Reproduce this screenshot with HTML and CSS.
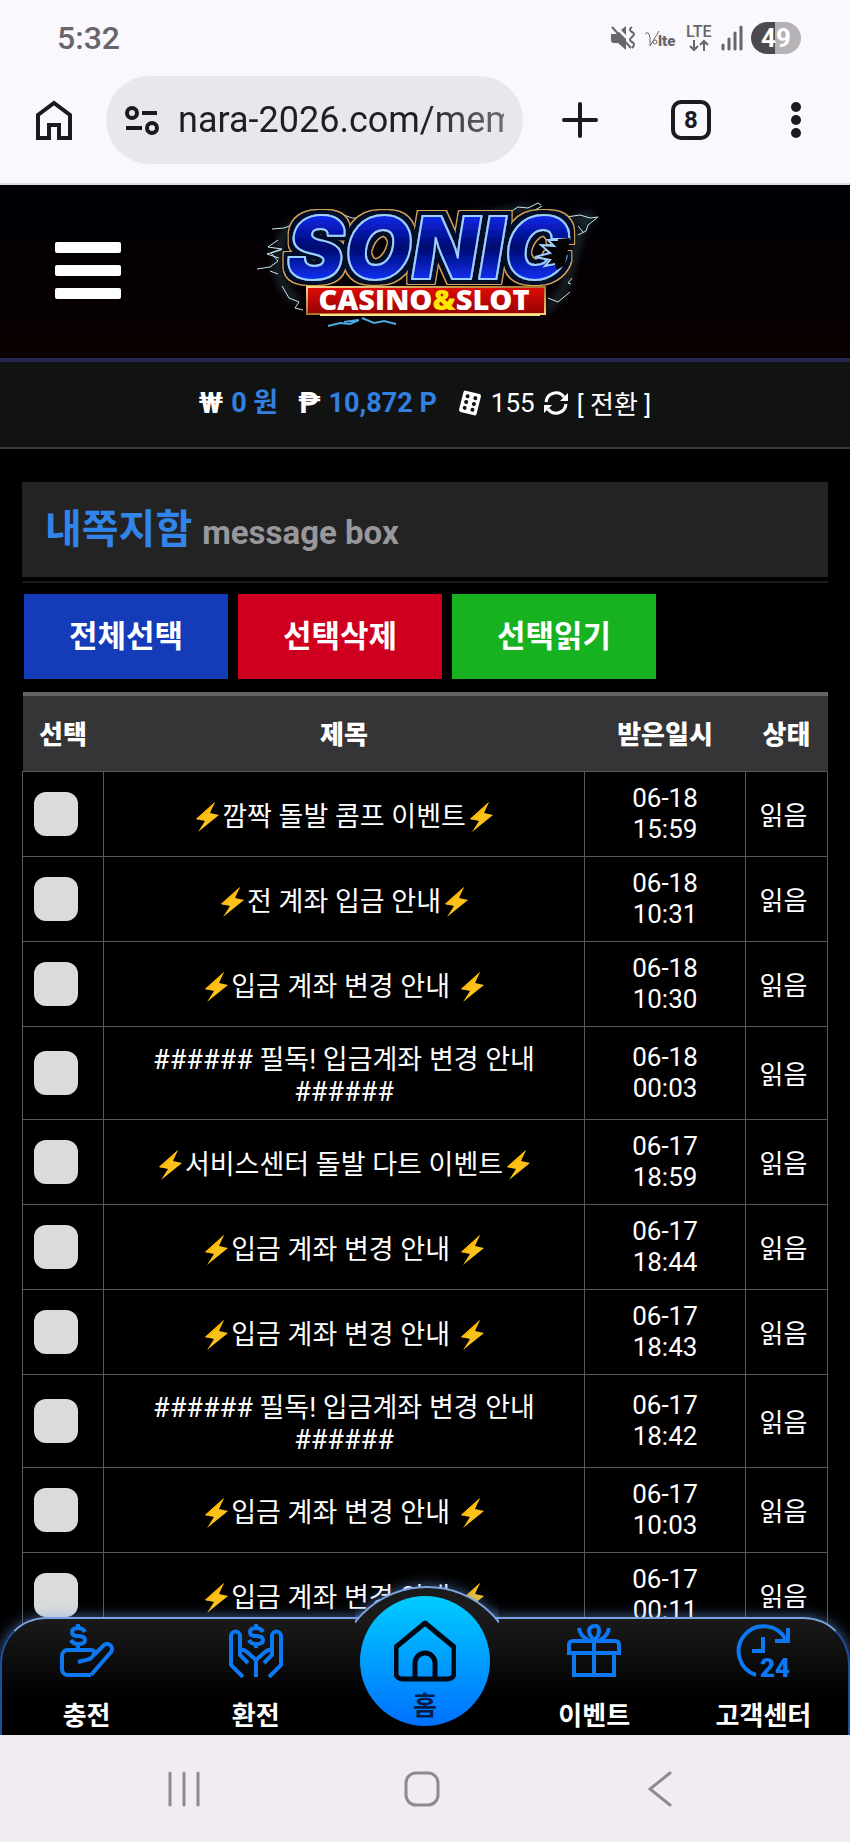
FILE: index.html
```html
<!DOCTYPE html>
<html lang="ko">
<head>
    <meta charset="UTF-8">
    <meta name="viewport" content="width=device-width, initial-scale=1.0">
    <title>내쪽지함</title>
    <link rel="stylesheet" href="styles.css">
</head>
<body>
    <svg class="symbols" aria-hidden="true">
        <symbol id="bolt" viewBox="0 0 30 30">
            <path d="M23 0L4 17l9 2L6 30 27 13l-9-2z" fill="#fcc21b"/>
            <path d="M23 0L4 17l3 .7L19 7z" fill="#feb804"/>
        </symbol>
    </svg>

    <div class="status">
        <span class="clock">5:32</span>
        <div class="status-icons">
            <svg width="26" height="26" viewBox="0 0 26 26">
                <path d="M1 9h5l3-2 7 7v11l-8-7H4a3 3 0 0 1-3-3zM11 5l5-4v9z" fill="#68666a"/>
                <path d="M2 2l19 21" stroke="#68666a" stroke-width="2"/>
                <path d="M22 2q-4 3 0 5t0 5t0 5t0 6" fill="none" stroke="#68666a" stroke-width="2"/>
            </svg>
            <svg width="34" height="26" viewBox="0 0 34 26">
                <path d="M1 9q4-4 5 4v8L15 6" fill="none" stroke="#68666a" stroke-width="1"/>
                <circle cx="11" cy="17" r="2" fill="none" stroke="#68666a"/>
                <text x="14" y="21" class="lte-small">lte</text>
            </svg>
            <svg width="27" height="30" viewBox="0 0 27 30">
                <text x="0" y="14" class="lte">LTE</text>
                <path d="M8 17v10M4 23l4 4 4-4M18 28V18M14 22l4-4 4 4" fill="none" stroke="#68666a" stroke-width="2"/>
            </svg>
            <svg width="22" height="26" viewBox="0 0 22 26">
                <path d="M2 20v4M8 14v10M14 8v16M20 2v22" stroke="#68666a" stroke-width="3" stroke-linecap="round"/>
            </svg>
            <span class="battery">49</span>
        </div>
    </div>

    <div class="browser">
        <button type="button" class="tool home" aria-label="홈페이지">
            <svg width="38" height="42" viewBox="0 0 38 42">
                <path d="M3 39V16L19 4l16 12v23H24V26H14v13z" fill="none" stroke="#1b1a1e" stroke-width="4"/>
            </svg>
        </button>
        <div class="address">
            <svg width="34" height="30" viewBox="0 0 34 30" fill="none" stroke="#1b1a1e" stroke-width="4">
                <circle cx="7" cy="8" r="5"/>
                <circle cx="27" cy="23" r="5"/>
                <path d="M17 8h15M1 23h16"/>
            </svg>
            <input type="text" aria-label="주소" value="nara-2026.com/mem">
        </div>
        <button type="button" class="tool plus" aria-label="새 탭">
            <svg width="36" height="36" viewBox="0 0 36 36">
                <path d="M18 2v32M2 18h32" stroke="#1b1a1e" stroke-width="4" stroke-linecap="round"/>
            </svg>
        </button>
        <button type="button" class="tool tabs">8</button>
        <button type="button" class="tool more" aria-label="메뉴">
            <svg width="10" height="38" viewBox="0 0 10 38" fill="#1b1a1e">
                <circle cx="5" cy="6" r="5"/>
                <circle cx="5" cy="19" r="5"/>
                <circle cx="5" cy="32" r="5"/>
            </svg>
        </button>
    </div>

    <div class="page">
        <header class="header">
            <button type="button" class="menu-btn" aria-label="전체메뉴">
                <span></span>
                <span></span>
                <span></span>
            </button>
            <a href="#" class="logo" aria-label="SONIC CASINO&amp;SLOT">
                <svg width="370" height="170" viewBox="0 0 370 170">
                    <defs>
                        <linearGradient id="sonicFill" x1="0" y1="0" x2="0" y2="1">
                            <stop offset=".2" stop-color="#0a28e8"/>
                            <stop offset=".5" stop-color="#02086e"/>
                            <stop offset=".8" stop-color="#0a30f0"/>
                        </linearGradient>
                        <linearGradient id="gold" x1="0" y1="0" x2="1" y2="1">
                            <stop offset="0" stop-color="#f6d68a"/>
                            <stop offset=".5" stop-color="#a8742c"/>
                            <stop offset="1" stop-color="#f8d070"/>
                        </linearGradient>
                        <linearGradient id="red" x1="0" y1="0" x2="0" y2="1">
                            <stop offset="0" stop-color="#e00c08"/>
                            <stop offset="1" stop-color="#960202"/>
                        </linearGradient>
                        <filter id="glow" x="-20%" y="-20%" width="140%" height="140%">
                            <feGaussianBlur stdDeviation="4"/>
                        </filter>
                        <!-- dark band and gold rim round the letters -->
                        <filter id="rim" x="-10%" y="-20%" width="120%" height="140%">
                            <feMorphology in="SourceAlpha" operator="dilate" radius="5" result="wide"/>
                            <feMorphology in="SourceAlpha" operator="dilate" radius="4" result="narrow"/>
                            <feFlood flood-color="#d8a452"/>
                            <feComposite in2="wide" operator="in" result="goldRim"/>
                            <feFlood flood-color="#04102c"/>
                            <feComposite in2="narrow" operator="in" result="darkRim"/>
                            <feMerge>
                                <feMergeNode in="goldRim"/>
                                <feMergeNode in="darkRim"/>
                                <feMergeNode in="SourceGraphic"/>
                            </feMerge>
                        </filter>
                    </defs>
                    <g fill="none" stroke="#5d93a0" stroke-width="4" opacity=".5" filter="url(#glow)">
                        <path d="M50 38l-8 14-6 28 6 18 14 18M330 34l20-4-10 18-16 56-18 20M66 32l40-2M230 32l60-10"/>
                    </g>
                    <g fill="none" stroke="#c4e8ee" stroke-width="1">
                        <path d="M32 43l12-1 8-3M38 54l-10 7 14 2-15 5 12 4M17 83l13-2 8-6-7-8 10-3M30 85l8 3M42 100l7 12 10 4-4 6 8 2M64 33l30-1 10-3 8 3 16 0"/>
                        <path d="M220 34l16-7 18-2 10 5 14-9 10 1 10-5 3 2M288 28l14-8M320 32l20-3 10 3 8-1-10 8-2 6-8 4M338 40l5 6M332 92l-4 5 3 1M308 112l10 4 12-10"/>
                        <path d="M88 140l12-3 10 1 9-4M104 136l14-2M122 132l12 5 10-2 12 3" stroke="#4ca8e0" stroke-width="2"/>
                    </g>
                    <text x="188" y="93" class="sonic" filter="url(#rim)">SONIC</text>
                    <path d="M330 52l-22 2 6 6-13-1 9 8-15 4 15 3-5 6 10-2 2 6 8-5z" fill="#060303"/>
                    <path d="M318 54l-10 0 6 6-13-1 9 8-15 4 15 3-5 6 10-2" fill="none" stroke="#9ed0ff" stroke-width="2"/>
                    <rect x="67" y="101" width="238" height="27" fill="url(#red)" stroke="url(#gold)" stroke-width="2"/>
                    <path d="M80 129h220" stroke="#ffe08a" stroke-width="2"/>
                    <text x="184" y="124" class="casino">CASINO<tspan fill="#ffe600">&amp;</tspan>SLOT</text>
                </svg>
            </a>
        </header>

        <div class="wallet">
            <span class="sign">₩</span>
            <b class="won">0 원</b>
            <span class="sign">₱</span>
            <b class="point">10,872 P</b>
            <svg width="26" height="26" viewBox="0 0 26 26">
                <g transform="rotate(14 13 13)">
                    <rect x="4" y="2" width="18" height="22" rx="2" fill="#fff"/>
                    <g fill="#111312">
                        <circle cx="9" cy="7" r="2"/>
                        <circle cx="17" cy="7" r="2"/>
                        <circle cx="9" cy="13" r="2"/>
                        <circle cx="17" cy="13" r="2"/>
                        <circle cx="9" cy="19" r="2"/>
                        <circle cx="17" cy="19" r="2"/>
                    </g>
                </g>
            </svg>
            <span>155</span>
            <svg width="26" height="26" viewBox="0 0 26 26">
                <path d="M3 12a10 10 0 0 1 18-5M23 14a10 10 0 0 1-18 5" fill="none" stroke="#fff" stroke-width="3"/>
                <path d="M25 3v8h-8zM1 23v-8h8z" fill="#fff"/>
            </svg>
            <a href="#" class="convert">[ 전환 ]</a>
        </div>

        <main class="content">
            <h1 class="title">내쪽지함 <small>message box</small></h1>

            <div class="btn-group">
                <button type="button" class="btn blue">전체선택</button>
                <button type="button" class="btn red">선택삭제</button>
                <button type="button" class="btn green">선택읽기</button>
            </div>

            <table class="list">
                <thead>
                    <tr>
                        <th class="col-check">선택</th>
                        <th>제목</th>
                        <th class="col-date">받은일시</th>
                        <th class="col-state">상태</th>
                    </tr>
                </thead>
                <tbody>
                    <tr>
                        <td class="check"><input type="checkbox" aria-label="선택"></td>
                        <td class="subject"><svg class="bolt"><use href="#bolt"/></svg>깜짝 돌발 콤프 이벤트<svg class="bolt"><use href="#bolt"/></svg></td>
                        <td>06-18<br>15:59</td>
                        <td class="state">읽음</td>
                    </tr>
                    <tr>
                        <td class="check"><input type="checkbox" aria-label="선택"></td>
                        <td class="subject"><svg class="bolt"><use href="#bolt"/></svg>전 계좌 입금 안내<svg class="bolt"><use href="#bolt"/></svg></td>
                        <td>06-18<br>10:31</td>
                        <td class="state">읽음</td>
                    </tr>
                    <tr>
                        <td class="check"><input type="checkbox" aria-label="선택"></td>
                        <td class="subject"><svg class="bolt"><use href="#bolt"/></svg>입금 계좌 변경 안내 <svg class="bolt"><use href="#bolt"/></svg></td>
                        <td>06-18<br>10:30</td>
                        <td class="state">읽음</td>
                    </tr>
                    <tr>
                        <td class="check"><input type="checkbox" aria-label="선택"></td>
                        <td class="subject">###### 필독! 입금계좌 변경 안내 ######</td>
                        <td>06-18<br>00:03</td>
                        <td class="state">읽음</td>
                    </tr>
                    <tr>
                        <td class="check"><input type="checkbox" aria-label="선택"></td>
                        <td class="subject"><svg class="bolt"><use href="#bolt"/></svg>서비스센터 돌발 다트 이벤트<svg class="bolt"><use href="#bolt"/></svg></td>
                        <td>06-17<br>18:59</td>
                        <td class="state">읽음</td>
                    </tr>
                    <tr>
                        <td class="check"><input type="checkbox" aria-label="선택"></td>
                        <td class="subject"><svg class="bolt"><use href="#bolt"/></svg>입금 계좌 변경 안내 <svg class="bolt"><use href="#bolt"/></svg></td>
                        <td>06-17<br>18:44</td>
                        <td class="state">읽음</td>
                    </tr>
                    <tr>
                        <td class="check"><input type="checkbox" aria-label="선택"></td>
                        <td class="subject"><svg class="bolt"><use href="#bolt"/></svg>입금 계좌 변경 안내 <svg class="bolt"><use href="#bolt"/></svg></td>
                        <td>06-17<br>18:43</td>
                        <td class="state">읽음</td>
                    </tr>
                    <tr>
                        <td class="check"><input type="checkbox" aria-label="선택"></td>
                        <td class="subject">###### 필독! 입금계좌 변경 안내 ######</td>
                        <td>06-17<br>18:42</td>
                        <td class="state">읽음</td>
                    </tr>
                    <tr>
                        <td class="check"><input type="checkbox" aria-label="선택"></td>
                        <td class="subject"><svg class="bolt"><use href="#bolt"/></svg>입금 계좌 변경 안내 <svg class="bolt"><use href="#bolt"/></svg></td>
                        <td>06-17<br>10:03</td>
                        <td class="state">읽음</td>
                    </tr>
                    <tr>
                        <td class="check"><input type="checkbox" aria-label="선택"></td>
                        <td class="subject"><svg class="bolt"><use href="#bolt"/></svg>입금 계좌 변경 안내 <svg class="bolt"><use href="#bolt"/></svg></td>
                        <td>06-17<br>00:11</td>
                        <td class="state">읽음</td>
                    </tr>
                </tbody>
            </table>
        </main>

        <nav class="tabbar">
            <a href="#" class="tab">
                <svg class="tab-icon" viewBox="0 0 54 54">
                    <path d="M18 0v4M18 19v7M25 8q-2-4-7-4-6 0-6 4t6 4q7 0 7 4t-7 4q-5 0-7-4"/>
                    <path d="M31 51H8a6 6 0 0 1-6-6V32a6 6 0 0 1 6-6h23q4 0 3 4-2 5-8 6l-8 2M34 31l10-10a5 5 0 0 1 7 7L31 51"/>
                </svg>
                충전
            </a>
            <a href="#" class="tab">
                <svg class="tab-icon" viewBox="0 0 54 54">
                    <path d="M27 0v4M27 19v5M34 8q-2-4-7-4-6 0-6 4t6 4q7 0 7 4t-7 4q-5 0-7-4"/>
                    <path d="M14 53L2 41V12a4 4 0 0 1 9 0v19l8 8M11 26q4-1 7 2l9 8v17M43 26q-4-1-7 2l-9 8M40 53l12-12V12a4 4 0 0 0-9 0v19l-8 8"/>
                </svg>
                환전
            </a>
            <a href="#" class="tab tab-home">
                <svg class="home-icon" viewBox="0 0 62 62">
                    <path d="M8 59a6 6 0 0 1-6-6V27L31 3l29 24v26a6 6 0 0 1-6 6zM21 59V43a10 10 0 0 1 20 0v16"/>
                </svg>
                홈
            </a>
            <a href="#" class="tab">
                <svg class="tab-icon" viewBox="0 0 54 54">
                    <path d="M2 29V21q0-4 4-4h42q4 0 4 4v8zM7 29v22h40V29M27 17v34"/>
                    <path d="M27 16q-5-5-5-9t5-5 5 5-5 9M12 4q1 8 9 12M42 4q-1 8-9 12"/>
                </svg>
                이벤트
            </a>
            <a href="#" class="tab">
                <svg class="tab-icon" viewBox="0 0 54 54">
                    <path d="M20 51A25 25 0 1 1 50 16M39 17h13V4M27 13v14H16"/>
                    <text x="24" y="53">24</text>
                </svg>
                고객센터
            </a>
        </nav>
    </div>

    <div class="sysbar">
        <button type="button" aria-label="최근 앱">
            <svg width="34" height="36" viewBox="0 0 34 36">
                <path d="M3 2v32M17 2v32M31 2v32"/>
            </svg>
        </button>
        <button type="button" aria-label="홈 화면">
            <svg width="36" height="36" viewBox="0 0 36 36">
                <rect x="2" y="2" width="32" height="32" rx="10"/>
            </svg>
        </button>
        <button type="button" aria-label="뒤로">
            <svg width="24" height="36" viewBox="0 0 24 36">
                <path d="M22 2L2 18l20 16"/>
            </svg>
        </button>
    </div>
</body>
</html>
```
FILE: styles.css
```css
*{
    box-sizing: border-box;
}
body{
    margin: 0;
    min-height: 100vh;
    display: flex;
    flex-direction: column;
    background: #000;
    color: #fff;
    font-family: Roboto, "Noto Sans CJK KR", sans-serif;
    font-size: 26px;
    line-height: 32px;
}
a{
    color: inherit;
    text-decoration: none;
}
button{
    padding: 0;
    border: none;
    background: none;
    font-family: inherit;
    cursor: pointer;
}
svg{
    flex: none;
}
.symbols{
    display: none;
}

/* phone status bar */
.status{
    display: flex;
    justify-content: space-between;
    align-items: center;
    height: 76px;
    padding: 0 49px 0 57px;
    background: #faf8fd;
}
.clock{
    color: #68666a;
    font-size: 32px;
    font-weight: 500;
}
.status-icons{
    display: flex;
    align-items: center;
    gap: 8px;
}
.lte{
    font: 500 16px Roboto, sans-serif;
    fill: #68666a;
}
.lte-small{
    font: 900 15px Roboto, sans-serif;
    fill: #68666a;
}
.battery{
    width: 50px;
    border-radius: 16px;
    background: linear-gradient(90deg, #4c4a4e 48%, #b5b3b7 48%);
    color: #fff;
    font-size: 26px;
    font-weight: 700;
    text-align: center;
}

/* browser toolbar */
.browser{
    display: flex;
    align-items: center;
    height: 109px;
    padding: 0 49px 19px 35px;
    border-bottom: 2px solid #dddbdf;
    background: #faf8fd;
}
.tool{
    flex: none;
    display: flex;
    align-items: center;
    justify-content: center;
}
.address{
    flex: 1;
    min-width: 0;
    display: flex;
    align-items: center;
    gap: 19px;
    height: 88px;
    margin-left: 33px;
    padding: 0 19px;
    border-radius: 44px;
    background: #e9e7ec;
}
.address input{
    flex: 1;
    min-width: 0;
    padding: 0;
    border: none;
    outline: none;
    background: none;
    color: #1f1e22;
    font-family: Roboto, sans-serif;
    font-size: 36px;
    mask-image: linear-gradient(90deg, #000 75%, rgba(0, 0, 0, .6));
}
.plus{
    margin: 0 73px 0 39px;
}
.tabs{
    width: 40px;
    height: 40px;
    margin-right: 80px;
    border: 4px solid #1b1a1e;
    border-radius: 10px;
    color: #1b1a1e;
    font-size: 24px;
    font-weight: 700;
}

/* site */
.page{
    position: relative;
    flex: 1;
    overflow: hidden;
}
.header{
    display: grid;
    grid-template-columns: 1fr auto 1fr;
    align-items: center;
    height: 177px;
    padding: 0 55px 2px;
    border-bottom: 4px solid #25254f;
    background: linear-gradient(#000006, #0a0000);
}
.menu-btn{
    display: flex;
    flex-direction: column;
    gap: 12px;
    width: 66px;
}
.menu-btn span{
    height: 11px;
    border-radius: 2px;
    background: #fff;
}
.logo svg{
    display: block;
}
.sonic{
    font: italic 900 87px Inter, sans-serif;
    fill: url(#sonicFill);
    stroke: #9ed0ff;
    stroke-width: 2px;
    stroke-linejoin: round;
    text-anchor: middle;
}
.casino{
    font: 800 29px "Open Sans", sans-serif;
    fill: #fff;
    text-anchor: middle;
}
.wallet{
    display: flex;
    justify-content: center;
    align-items: center;
    gap: 8px;
    height: 87px;
    padding-bottom: 4px;
    border-bottom: 2px solid #38393b;
    background: #111312;
}
.wallet b{
    color: #3280e0;
    font-size: 27px;
}
.sign{
    font-size: 30px;
    font-weight: 700;
}
.won, .point{
    margin-right: 12px;
}
.convert{
    padding-top: 4px;
}
.content{
    padding: 33px 22px 0;
}
.title{
    display: flex;
    align-items: center;
    gap: 10px;
    height: 95px;
    margin: 0 0 4px;
    padding: 0 23px;
    background: #232324;
    color: #3185e8;
    font-size: 40px;
    font-weight: 700;
}
.title small{
    padding-top: 6px;
    color: #98979b;
    font-size: 33px;
}
.btn-group{
    display: flex;
    gap: 10px;
    padding: 11px 2px 13px;
    border-top: 2px solid #1c1c1e;
}
.btn{
    width: 204px;
    height: 85px;
    padding-bottom: 6px;
    color: #fff;
    font-size: 31px;
    font-weight: 700;
}
.blue{
    background: #143bb8;
}
.red{
    background: #cf001f;
}
.green{
    background: #17b21f;
}
.list{
    width: 100%;
    table-layout: fixed;
    border-collapse: collapse;
    text-align: center;
}
.list th{
    height: 77px;
    padding: 4px 0 0;
    border-top: 4px solid #656466;
    background: #353436;
    font-weight: 900;
}
.list td{
    padding: 11px 0;
    border: 1px solid #59585b;
    line-height: 31px;
}
.col-check{
    width: 81px;
}
.col-date{
    width: 161px;
}
.col-state{
    width: 82px;
}
.list .check{
    padding: 0 0 0 11px;
    text-align: left;
}
.check input{
    appearance: none;
    display: block;
    width: 44px;
    height: 44px;
    margin: 0;
    border-radius: 12px;
    background: #dadcdb;
}
.list .subject{
    padding: 17px 40px 11px;
    font-size: 27px;
    line-height: 32px;
}
.list .state{
    padding: 17px 6px 11px 0;
}
.bolt{
    width: 30px;
    height: 30px;
    vertical-align: -6px;
}

/* bottom menu */
.tabbar{
    position: absolute;
    left: 0;
    right: 0;
    bottom: 0;
    display: grid;
    grid-template-columns: repeat(5, 1fr);
    height: 118px;
    border: 2px solid #7ba3e0;
    border-bottom: none;
    border-radius: 46px 46px 0 0;
    border-color: #7ba3e0 #1d4f9e;
    background: linear-gradient(#1a1a1b, #000 70%);
    box-shadow: 0 0 14px rgba(110, 160, 235, .6);
}
.tabbar::before{
    content: "";
    position: absolute;
    left: 50%;
    top: -33px;
    width: 180px;
    height: 180px;
    margin-left: -90px;
    border: 2px solid #7ba3e0;
    border-radius: 50%;
    background: #1a1a1b;
    box-shadow: 0 0 14px rgba(110, 160, 235, .6);
    clip-path: inset(-20px 20px 147px 20px);
}
.tab{
    position: relative;
    display: flex;
    flex-direction: column;
    align-items: center;
    gap: 22px;
    padding-top: 5px;
    font-weight: 700;
}
.tab-icon{
    width: 54px;
    height: 54px;
    fill: none;
    stroke: #0c78f2;
    stroke-width: 4px;
}
.tab-icon text{
    font: 900 26px Roboto, sans-serif;
    fill: #0c78f2;
    stroke: none;
}
.tab-home{
    justify-self: center;
    gap: 8px;
    width: 130px;
    height: 130px;
    margin-top: -23px;
    padding-top: 24px;
    border-radius: 50%;
    background: linear-gradient(#00ccff, #0070ff);
    color: #041c48;
}
.home-icon{
    width: 62px;
    height: 62px;
    fill: none;
    stroke: #000814;
    stroke-width: 5px;
    stroke-linejoin: round;
}

/* phone navigation bar */
.sysbar{
    display: flex;
    justify-content: space-between;
    align-items: center;
    height: 107px;
    padding: 0 168px 0 162px;
    background: #f0ecf1;
}
.sysbar button{
    width: 44px;
}
.sysbar svg{
    display: block;
    margin: 0 auto;
    fill: none;
    stroke: #8e8b90;
    stroke-width: 3px;
    stroke-linecap: round;
}
```
